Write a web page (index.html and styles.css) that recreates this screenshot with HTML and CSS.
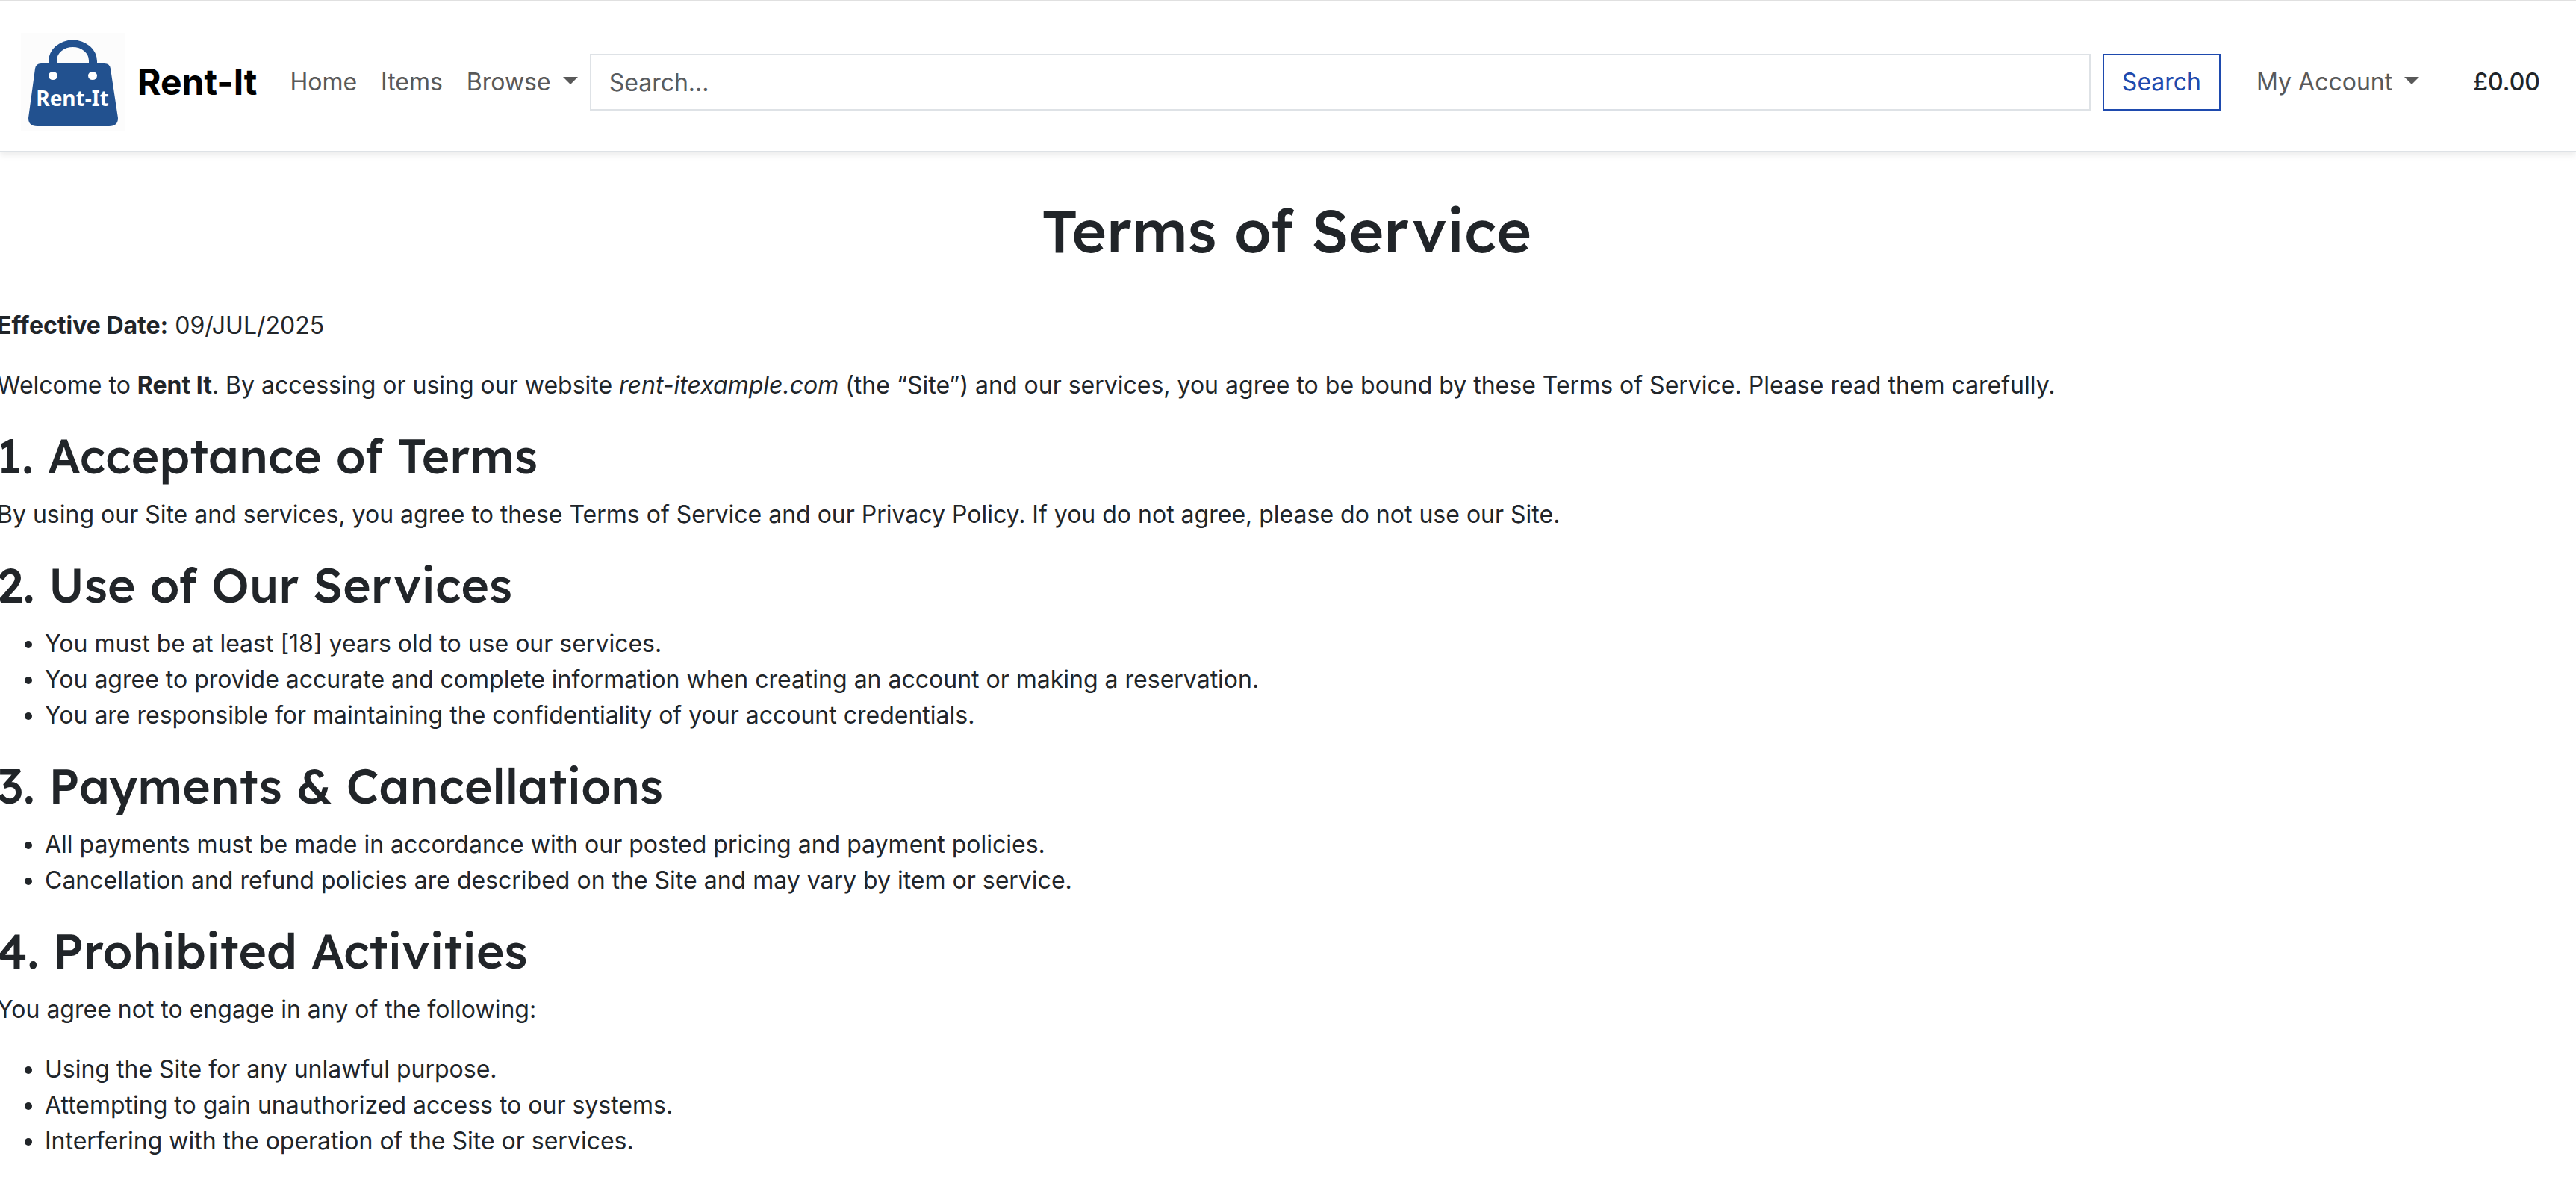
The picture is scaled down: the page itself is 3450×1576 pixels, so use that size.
FILE: index.html
```
<!DOCTYPE html>
<html lang="en">
<head>
<meta charset="utf-8">
<title>Terms of Service – Rent-It</title>
<link rel="stylesheet" href="styles.css">
</head>
<body>
<header class="navbar">
  <a class="brand" href="#">
    <svg class="brand-logo" viewBox="0 0 140 132" role="img" aria-label="Rent-It logo">
      <rect width="140" height="132" fill="#fcfcfc"/>
      <path d="M37 44V38a32.500 28.500 0 0 1 65 0V44H91V37a21.500 18 0 0 0-43 0V44Z" fill="#22518f"/>
      <path d="M27 41H112Q119 41 120 48L130 114Q130 125 118 125H22Q10 125 10 114L19 48Q20 41 27 41Z" fill="#22518f"/>
      <ellipse cx="43" cy="57.500" rx="6" ry="5.500" fill="#fff"/>
      <ellipse cx="96" cy="57.500" rx="6" ry="5.500" fill="#fff"/>
      <text class="logo-text" x="69" y="98" text-anchor="middle">Rent-It</text>
    </svg>
    <span class="brand-name">Rent-It</span>
  </a>
  <nav class="nav-links" aria-label="Main">
    <a class="nav-link" href="#">Home</a>
    <a class="nav-link" href="#">Items</a>
    <a class="nav-link dropdown" href="#">Browse</a>
  </nav>
  <form class="search" role="search">
    <input class="search-input" type="search" placeholder="Search..." aria-label="Search">
    <button class="search-button" type="submit">Search</button>
  </form>
  <a class="nav-link account dropdown" href="#">My Account</a>
  <a class="cart-total" href="#">£0.00</a>
</header>
<main class="content">
  <h1>Terms of Service</h1>
  <p><strong>Effective Date:</strong> 09/JUL/2025</p>
  <p>Welcome to <strong>Rent It</strong>. By accessing or using our website <em>rent-itexample.com</em> (the “Site”) and our services, you agree to be bound by these Terms of Service. Please read them carefully.</p>
  <h2>1. Acceptance of Terms</h2>
  <p>By using our Site and services, you agree to these Terms of Service and our Privacy Policy. If you do not agree, please do not use our Site.</p>
  <h2>2. Use of Our Services</h2>
  <ul>
    <li>You must be at least [18] years old to use our services.</li>
    <li>You agree to provide accurate and complete information when creating an account or making a reservation.</li>
    <li>You are responsible for maintaining the confidentiality of your account credentials.</li>
  </ul>
  <h2>3. Payments &amp; Cancellations</h2>
  <ul>
    <li>All payments must be made in accordance with our posted pricing and payment policies.</li>
    <li>Cancellation and refund policies are described on the Site and may vary by item or service.</li>
  </ul>
  <h2>4. Prohibited Activities</h2>
  <p>You agree not to engage in any of the following:</p>
  <ul>
    <li>Using the Site for any unlawful purpose.</li>
    <li>Attempting to gain unauthorized access to our systems.</li>
    <li>Interfering with the operation of the Site or services.</li>
  </ul>
</main>
</body>
</html>
```
FILE: styles.css
```
* { box-sizing: border-box; }

body {
  margin: 0;
  background: #fff;
  color: #212529;
  font: 400 32px/48px Inter, "Liberation Sans", sans-serif;
}

a { text-decoration: none; }

.navbar {
  display: flex;
  align-items: center;
  padding: 42px 48px 26px 28px;
  border-top: 2px solid #e0e0e0;
  border-bottom: 2px solid #dee2e6;
  box-shadow: 0 4px 8px rgba(0, 0, 0, 0.075);
}

.brand {
  display: flex;
  align-items: center;
  gap: 16px;
  margin-right: 28px;
  color: #000;
}

.brand-logo {
  width: 140px;
  height: 132px;
}

.logo-text {
  font: 700 28px "Noto Sans", sans-serif;
  fill: #fff;
}

.brand-name {
  font-size: 48px;
  font-weight: 700;
}

.nav-links { display: flex; }

.nav-link {
  padding: 16px;
  color: #595959;
}

.dropdown::after {
  content: "";
  display: inline-block;
  margin-left: 16px;
  vertical-align: 8px;
  border: 10px solid transparent;
  border-top-color: currentColor;
  border-bottom: 0;
}

.search {
  display: flex;
  flex: 1;
  gap: 16px;
}

.search-input,
.search-button {
  height: 76px;
  padding: 12px 24px;
  border: 2px solid #dee2e6;
  background: #fff;
  font: 400 32px/48px Inter, "Liberation Sans", sans-serif;
}

.search-input {
  flex: 1;
  min-width: 0;
  appearance: none;
}

.search-input::placeholder {
  color: #595c5f;
  opacity: 1;
}

.search-button {
  border-color: #1e4aae;
  color: #1e4aae;
}

.account { margin-left: 32px; }

.cart-total {
  margin-left: 56px;
  color: #212529;
  font-weight: 500;
}

.content {
  margin-left: -4px;
  padding-top: 56px;
}

h1,
h2 {
  margin: 0 0 16px;
  font-family: Lexend, Lato, "Open Sans", sans-serif;
  font-size: 64px;
  font-weight: 500;
  line-height: 77px;
}

h1 {
  margin-bottom: 56px;
  font-size: 80px;
  line-height: 96px;
  text-align: center;
}

p,
ul {
  margin: 0 0 32px;
}

ul { padding-left: 64px; }

ul:last-child { margin-bottom: 0; }
```
